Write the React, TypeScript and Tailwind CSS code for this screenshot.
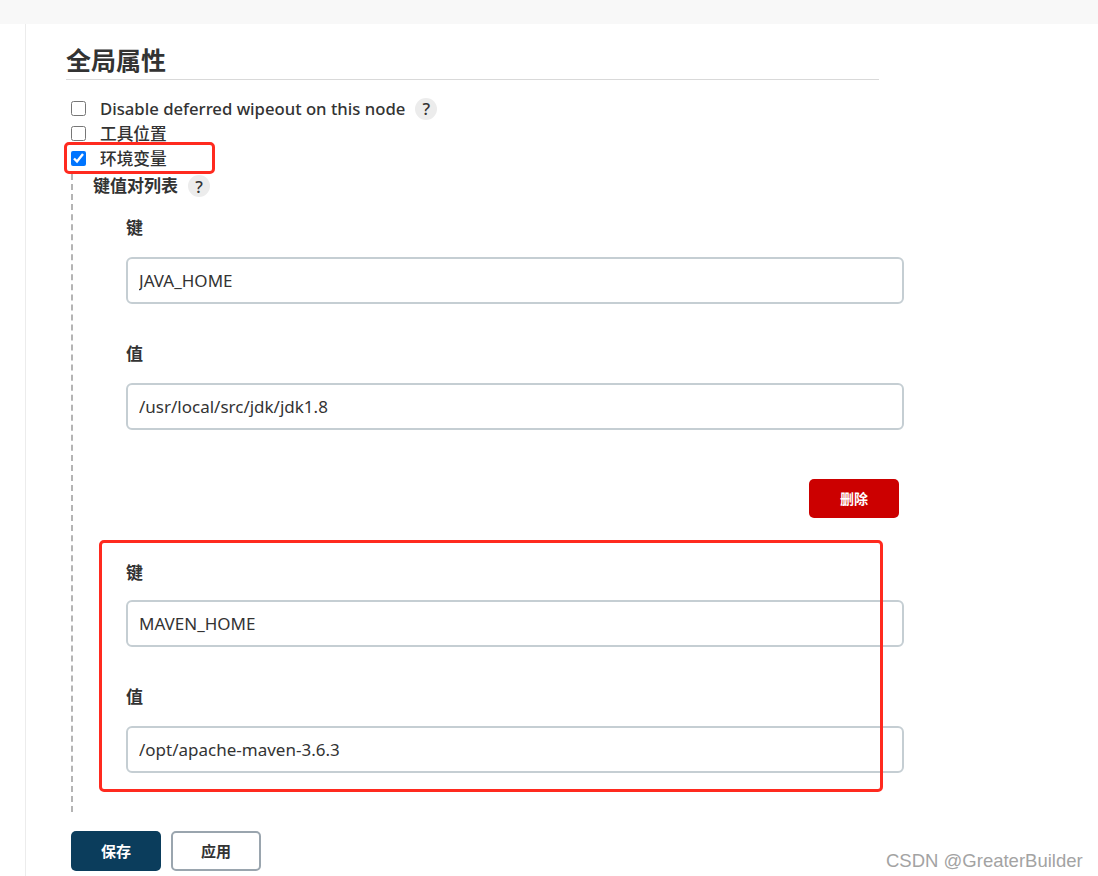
import React from 'react';

const font = { fontFamily: '"Noto Sans", "Noto Sans CJK SC", sans-serif' };

const Help = () => (
  <span className="ml-[10px] inline-flex h-[22px] w-[22px] items-center justify-center rounded-full bg-[#ececec] text-[17px] font-medium leading-none text-[#333]">
    ?
  </span>
);

const CheckRow = ({ label, checked = false, help = false }: { label: string; checked?: boolean; help?: boolean }) => (
  <label className="flex h-[25px] items-center">
    <input
      type="checkbox"
      defaultChecked={checked}
      className="ml-[5px] h-[15px] w-[15px] accent-[#0075ff]"
    />
    <span className="ml-[14px] text-[16.7px] font-medium text-[#333]">{label}</span>
    {help && <Help />}
  </label>
);

const Field = ({ label, value, first }: { label: string; value: string; first?: boolean }) => (
  <div className={first ? 'mt-[19px]' : 'mt-[39px]'}>
    <div className="h-[22px] text-[17px] font-bold leading-[22px] text-[#333]">{label}</div>
    <input
      readOnly
      value={value}
      className="mt-[18px] h-[47px] w-[778px] rounded-[6px] border-2 border-[#c5ced3] px-[11px] text-[17px] text-[#333] outline-none"
    />
  </div>
);

export default function App() {
  return (
    <div className="relative h-[876px] w-[1098px] overflow-hidden bg-white" style={font}>
      <div className="h-[24px] bg-[#f8f8f8]" />
      <div className="flex h-[852px]">
        <div className="w-[25px]" />
        <div className="flex-1 border-l border-[#ececec] pl-[40px]">
          <h2 className="mt-[20px] w-[813px] border-b border-[#d9d9d9] pb-[3px] text-[25px] font-bold leading-[32px] text-[#333]">
            全局属性
          </h2>
          <div className="mt-[16px]">
            <CheckRow label="Disable deferred wipeout on this node" help />
            <CheckRow label="工具位置" />
            <CheckRow label="环境变量" checked />
          </div>
          <div className="ml-[5px] h-[638px] border-l-2 border-dashed border-[#b4b4b4] pl-[20px]">
            <div className="mt-[3px] flex h-[24px] items-center text-[17px] font-bold text-[#333]">
              键值对列表
              <Help />
            </div>
            <div className="pl-[33px]">
              <Field label="键" value="JAVA_HOME" first />
              <Field label="值" value="/usr/local/src/jdk/jdk1.8" />
              <div className="mt-[49px] flex w-[773px] justify-end">
                <button className="h-[39px] w-[90px] rounded-[5px] bg-[#cc0000] text-[14px] font-bold text-white">
                  删除
                </button>
              </div>
              <div className="mt-[44px]">
                <div className="h-[22px] text-[17px] font-bold leading-[22px] text-[#333]">键</div>
                <input
                  readOnly
                  value="MAVEN_HOME"
                  className="mt-[16px] h-[47px] w-[778px] rounded-[6px] border-2 border-[#c5ced3] px-[11px] text-[17px] text-[#333] outline-none"
                />
              </div>
              <Field label="值" value="/opt/apache-maven-3.6.3" />
            </div>
          </div>
          <div className="mt-[19px] flex gap-[10px] pl-[5px]">
            <button className="h-[40px] w-[90px] rounded-[5px] bg-[#0b3d5c] text-[15px] font-bold text-white">
              保存
            </button>
            <button className="h-[40px] w-[90px] rounded-[5px] border-2 border-[#9aa5ae] bg-white text-[15px] font-bold text-[#333]">
              应用
            </button>
          </div>
        </div>
      </div>

      {/* annotation overlays */}
      <div className="pointer-events-none absolute left-[64px] top-[142px] h-[32px] w-[151px] rounded-[5px] border-[3px] border-[#ff2a1f]" />
      <div className="pointer-events-none absolute left-[99px] top-[540px] h-[252px] w-[784px] rounded-[5px] border-[3px] border-[#ff2a1f]" />
      <div
        className="pointer-events-none absolute left-[886px] top-[847px] text-[18.5px] text-[#a3a3a3]"
        style={{ fontFamily: '"Liberation Sans", Arial, sans-serif', textShadow: '0 0 1px #fff' }}
      >
        CSDN @GreaterBuilder
      </div>
    </div>
  );
}
